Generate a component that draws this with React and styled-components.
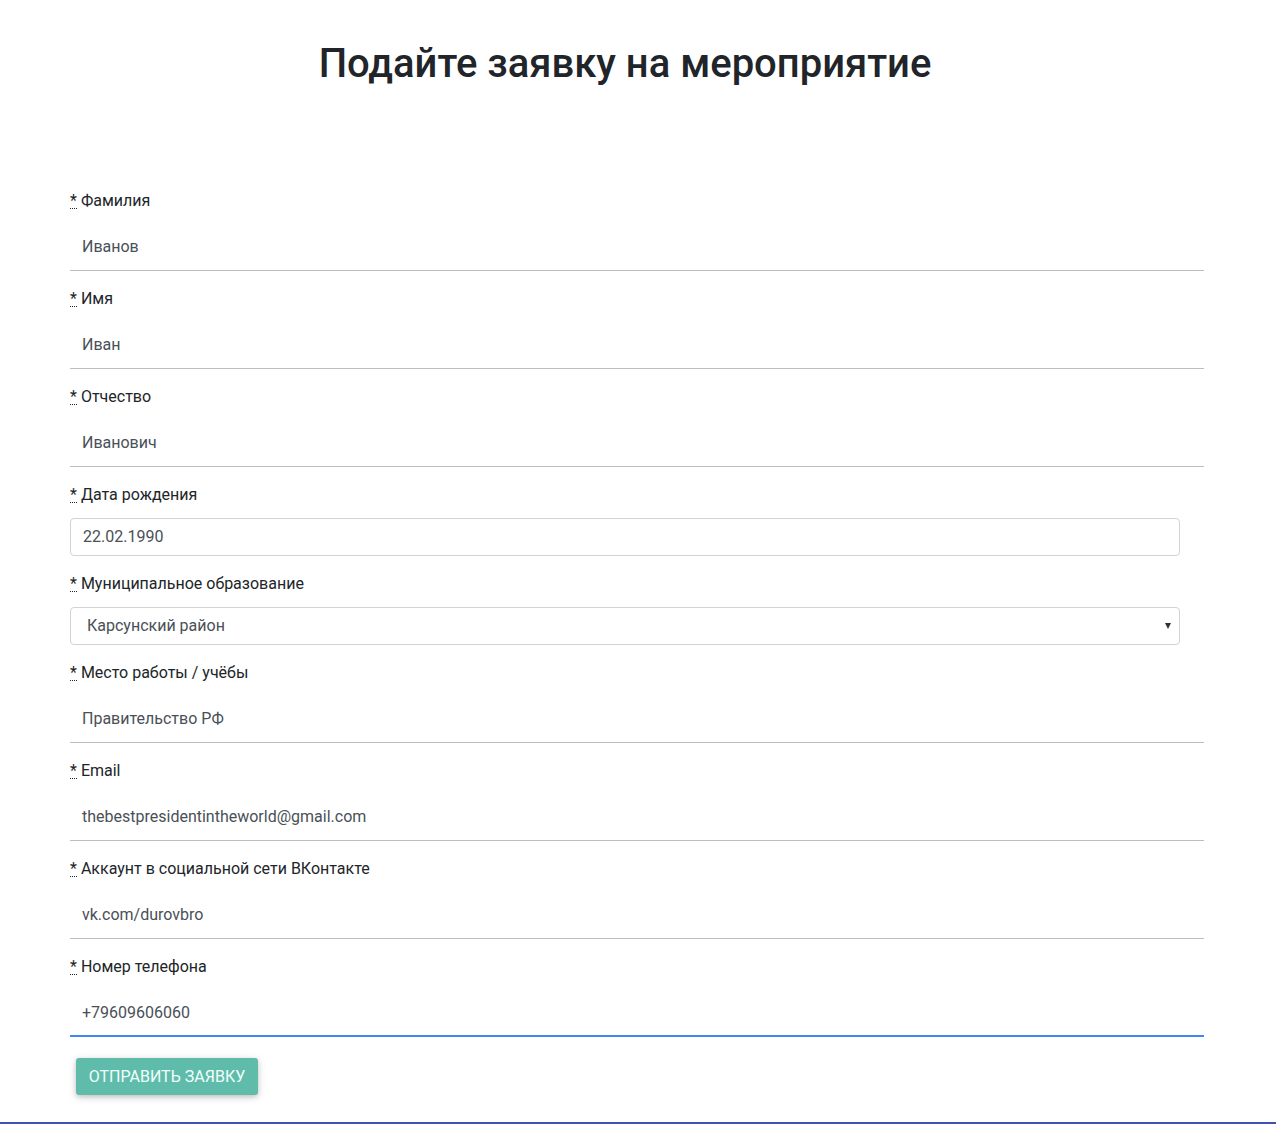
import React from "react";
import styled, { createGlobalStyle } from "styled-components";

const Global = createGlobalStyle`
  html, body { margin: 0; padding: 0; background: #fff; }
  body { font-family: Roboto, "Noto Sans", Arial, sans-serif; color: #212529; }
  * { box-sizing: border-box; }
`;

const Page = styled.div`
  min-height: 1124px;
  display: flex;
  flex-direction: column;
`;

const Main = styled.main`
  flex: 1;
  padding: 0 0 0 70px;
`;

const Title = styled.h1`
  width: 1110px;
  margin: 0;
  padding-top: 40px;
  height: 188px;
  text-align: center;
  font-family: Roboto, sans-serif;
  font-weight: 500;
  font-size: 40px;
  line-height: 48px;
  color: #212529;
`;

const Field = styled.div`
  margin-bottom: ${(p) => p.$mb}px;
`;

const Label = styled.label`
  display: block;
  font-size: 16px;
  line-height: 24px;
  padding-top: 1px;
  color: #212529;
  margin-bottom: ${(p) => p.$mb}px;
`;

const Req = styled.abbr`
  text-decoration: none;
  border-bottom: 1px dotted #212529;
  cursor: help;
  margin-right: 4px;
  display: inline-block;
  line-height: 14px;
`;

const LineInput = styled.div`
  width: 1134px;
  height: 48px;
  display: flex;
  align-items: center;
  padding-left: 12px;
  font-size: 16px;
  color: #495057;
  border-bottom: ${(p) => (p.$active ? "2px solid #4285f4" : "1px solid #bdbdbd")};
`;

const BoxInput = styled.div`
  width: 1110px;
  height: 38px;
  display: flex;
  align-items: center;
  justify-content: space-between;
  padding: 0 8px 2px ${(p) => p.$pl}px;
  font-size: 16px;
  color: #495057;
  border: 1px solid #ced4da;
  border-radius: 4px;
  background: #fff;
`;

const Arrow = styled.span`
  width: 0;
  height: 0;
  border-left: 3.5px solid transparent;
  border-right: 3.5px solid transparent;
  border-top: 6px solid #333;
  margin-top: 2px;
`;

const Button = styled.button`
  margin: 21px 0 0 6px;
  width: 182px;
  height: 37px;
  border: none;
  border-radius: 3px;
  background: #5fbcab;
  color: #f2fffb;
  font-family: Roboto, sans-serif;
  font-size: 16px;
  text-transform: uppercase;
  letter-spacing: 0;
  box-shadow: 0 2px 5px rgba(0,0,0,0.16), 0 2px 10px rgba(0,0,0,0.12);
  cursor: pointer;
`;

const Footer = styled.footer`
  margin-top: auto;
  height: 2px;
  background: #3f51b5;
`;

const lineFields = [
  ["Фамилия", "Иванов"],
  ["Имя", "Иван"],
  ["Отчество", "Иванович"],
];

const lineFields2 = [
  ["Место работы / учёбы", "Правительство РФ"],
  ["Email", "thebestpresidentintheworld@gmail.com"],
  ["Аккаунт в социальной сети ВКонтакте", "vk.com/durovbro"],
];

function LineField({ label, value, active }) {
  return (
    <Field $mb={active ? 0 : 15}>
      <Label $mb={10}>
        <Req title="обязательное поле">*</Req>
        {label}
      </Label>
      <LineInput $active={active}>{value}</LineInput>
    </Field>
  );
}

export default function App() {
  return (
    <Page>
      <Global />
      <Main>
        <Title>Подайте заявку на мероприятие</Title>
        {lineFields.map(([l, v]) => (
          <LineField key={l} label={l} value={v} />
        ))}
        <Field $mb={15}>
          <Label $mb={11}>
            <Req>*</Req>Дата рождения
          </Label>
          <BoxInput $pl={12}>22.02.1990</BoxInput>
        </Field>
        <Field $mb={15}>
          <Label $mb={11}>
            <Req>*</Req>Муниципальное образование
          </Label>
          <BoxInput $pl={16}>
            Карсунский район
            <Arrow />
          </BoxInput>
        </Field>
        {lineFields2.map(([l, v]) => (
          <LineField key={l} label={l} value={v} />
        ))}
        <LineField label="Номер телефона" value="+79609606060" active />
        <Button>Отправить заявку</Button>
      </Main>
      <Footer />
    </Page>
  );
}
